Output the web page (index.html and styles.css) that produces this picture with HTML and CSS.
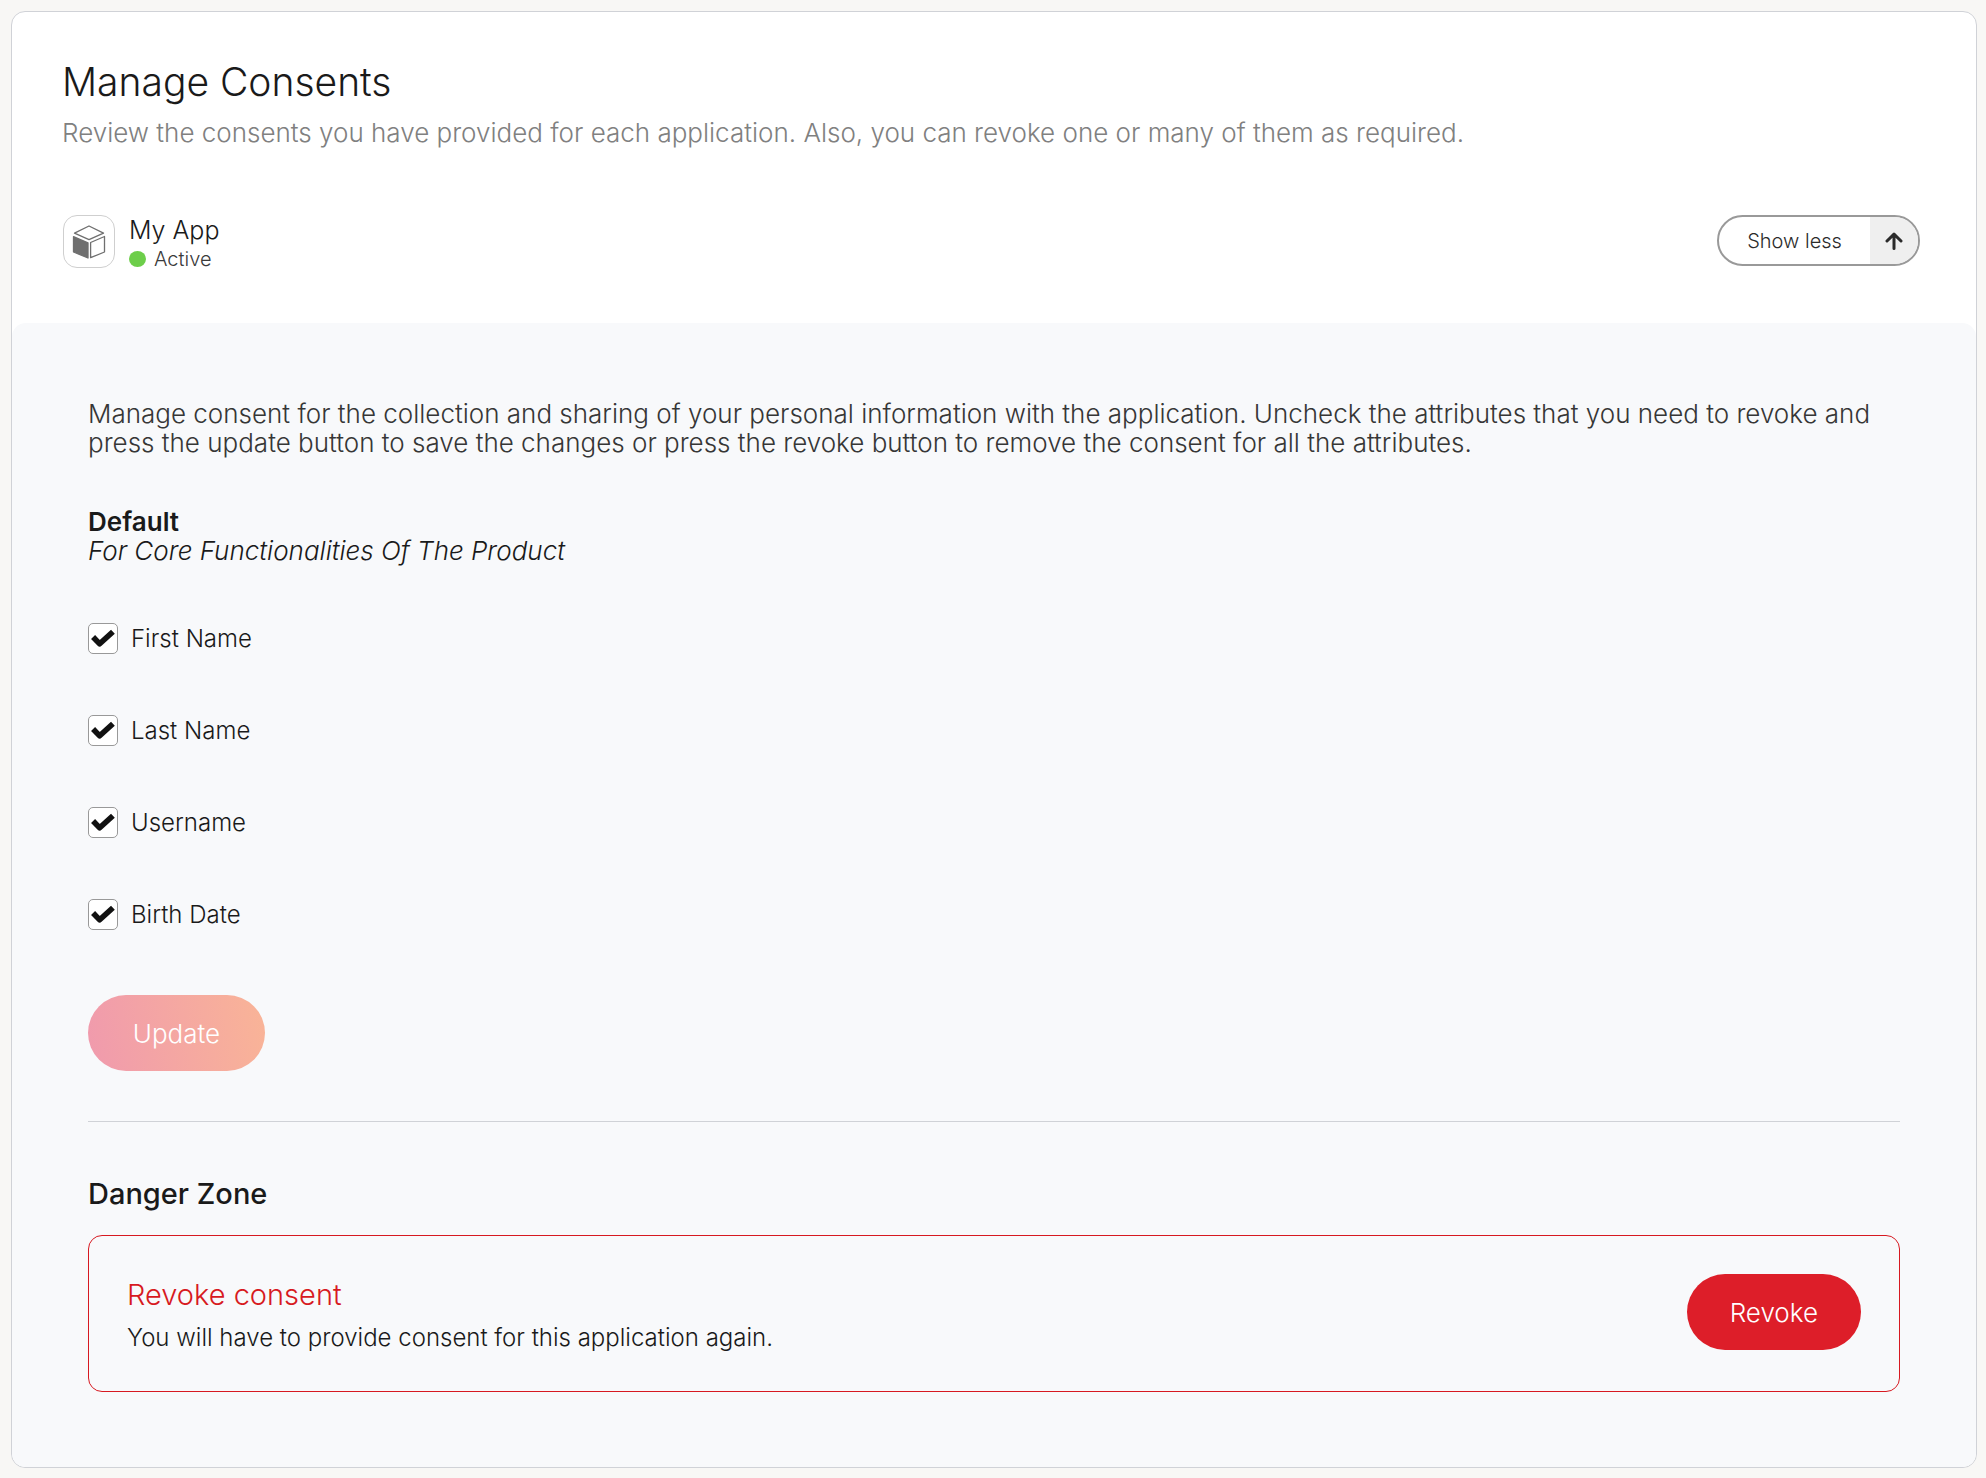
FILE: index.html
```html
<!DOCTYPE html>
<html lang="en">
<head>
<meta charset="utf-8">
<meta name="viewport" content="width=device-width, initial-scale=1">
<title>Manage Consents</title>
<link rel="stylesheet" href="styles.css">
</head>
<body>
<main class="card">
  <header class="card-header">
    <h1 class="title">Manage Consents</h1>
    <p class="subtitle">Review the consents you have provided for each application. Also, you can revoke one or many of them as required.</p>
  </header>

  <section class="app-row">
    <div class="app-icon">
      <svg width="34" height="34" viewBox="0 0 34 34" fill="none" stroke="#6f6f6f" stroke-width="1.3" stroke-linejoin="round" aria-hidden="true">
        <path d="M17 1 31.500 8.200 17 14.600 2.500 8.200Z"/>
        <path d="M1.500 11.700 16 17.800V33L1.500 27Z" fill="#6f6f6f"/>
        <path d="M32.500 11.500 18.600 17.500V32.700L32.500 27Z"/>
      </svg>
    </div>
    <div class="app-info">
      <h2 class="app-name">My App</h2>
      <p class="app-status"><span class="dot"></span>Active</p>
    </div>
    <button class="toggle" type="button" aria-expanded="true">
      <span class="toggle-text">Show less</span>
      <span class="toggle-icon">
        <svg width="18" height="18" viewBox="0 0 18 18" fill="none" stroke="#2b2b2b" stroke-width="3" stroke-linecap="round" stroke-linejoin="round" aria-hidden="true">
          <path d="M9 16.500V2.300M2 9 9 2.200 16 9"/>
        </svg>
      </span>
    </button>
  </section>

  <section class="panel">
    <p class="intro">Manage consent for the collection and sharing of your personal information with the application. Uncheck the attributes that you need to revoke and press the update button to save the changes or press the revoke button to remove the consent for all the attributes.</p>

    <form class="consent-form">
      <h3 class="purpose">Default</h3>
      <p class="purpose-note">For Core Functionalities Of The Product</p>
      <div class="checks">
        <label class="check"><input type="checkbox" checked>First Name</label>
        <label class="check"><input type="checkbox" checked>Last Name</label>
        <label class="check"><input type="checkbox" checked>Username</label>
        <label class="check"><input type="checkbox" checked>Birth Date</label>
      </div>
      <button class="btn btn-update" type="submit" disabled>Update</button>
    </form>

    <hr class="divider">

    <h3 class="danger-title">Danger Zone</h3>
    <div class="danger-box">
      <div class="danger-text">
        <h4 class="danger-heading">Revoke consent</h4>
        <p class="danger-note">You will have to provide consent for this application again.</p>
      </div>
      <button class="btn btn-revoke" type="button">Revoke</button>
    </div>
  </section>
</main>
</body>
</html>
```

FILE: styles.css
```css
* {
  box-sizing: border-box;
}

body {
  margin: 0;
  padding: 11px 9px 10px 11px;
  background: #f8f7f5;
  color: #1a1a1a;
  font-family: Inter, "Liberation Sans", sans-serif;
  font-weight: 350;
}

h1, h2, h3, h4, p {
  margin: 0;
  font-weight: 350;
}

button,
input {
  font: inherit;
  margin: 0;
}

.card {
  border: 1px solid #d0d2d7;
  border-radius: 14px;
  background: #fff;
}

.card-header {
  padding: 46px 50px 0;
}

.title {
  font-size: 39px;
  line-height: 48px;
}

.subtitle {
  margin-top: 12px;
  font-size: 26px;
  font-weight: 300;
  line-height: 30px;
  color: #808080;
}

.app-row {
  display: flex;
  align-items: flex-start;
  padding: 67px 56px 51px 51px;
}

.app-icon {
  display: flex;
  align-items: center;
  justify-content: center;
  width: 52px;
  height: 53px;
  border: 1px solid #cfcfcf;
  border-radius: 14px;
}

.app-info {
  flex: 1;
  padding-left: 14px;
}

.app-name {
  font-size: 25px;
  line-height: 31px;
}

.app-status {
  display: flex;
  align-items: center;
  gap: 8px;
  font-size: 20px;
  line-height: 26px;
  color: #3a3a3a;
}

.dot {
  width: 17px;
  height: 16px;
  border-radius: 50%;
  background: #6dce4a;
}

.toggle {
  display: flex;
  align-items: stretch;
  height: 51px;
  padding: 0;
  overflow: hidden;
  border: 2px solid #999;
  border-radius: 26px;
  background: #fff;
  color: #2b2b2b;
  font-size: 20px;
}

.toggle-text {
  display: flex;
  align-items: center;
  justify-content: center;
  width: 151px;
}

.toggle-icon {
  display: flex;
  align-items: center;
  justify-content: center;
  width: 48px;
  background: #efefef;
}

.panel {
  padding: 76px 76px 75px;
  border-radius: 14px;
  background: #f8f9fb;
}

.intro {
  font-size: 26px;
  line-height: 29px;
  color: #363636;
}

.consent-form {
  padding-top: 50px;
}

.purpose {
  font-size: 26px;
  font-weight: 600;
  line-height: 29px;
}

.purpose-note {
  font-size: 26px;
  font-style: italic;
  line-height: 29px;
}

.checks {
  display: grid;
  gap: 61px;
  padding: 58px 0 65px;
}

.check {
  display: flex;
  align-items: center;
  justify-self: start;
  gap: 13px;
  height: 31px;
  font-size: 24px;
}

.check input {
  appearance: none;
  width: 30px;
  height: 31px;
  border: 1px solid #999;
  border-radius: 5px;
  background: #fff;
}

.check input:checked {
  background: #fff url("data:image/svg+xml,%3Csvg xmlns='http://www.w3.org/2000/svg' viewBox='0 0 29 29' fill='none' stroke='%23111' stroke-width='5.500' stroke-linejoin='round'%3E%3Cpath d='M4.500 13 11 19.800 24 7.800'/%3E%3C/svg%3E") center / 29px 29px no-repeat;
}

.btn {
  height: 76px;
  padding: 0 43px;
  border: 0;
  border-radius: 38px;
  color: #fff;
  font-size: 26px;
  font-weight: 300;
}

.btn-update {
  display: block;
  min-width: 177px;
  background: linear-gradient(80deg, #f09aad, #f9b497);
}

.divider {
  margin: 50px 0 0;
  border: 0;
  border-top: 1px solid #d0d2d7;
}

.danger-title {
  margin-top: 54px;
  font-size: 29px;
  font-weight: 500;
  line-height: 36px;
}

.danger-box {
  display: flex;
  align-items: flex-start;
  justify-content: space-between;
  margin-top: 23px;
  padding: 38px 38px 35px;
  border: 1px solid #d71921;
  border-radius: 14px;
}

.danger-heading {
  color: #d71921;
  font-size: 29px;
  line-height: 42px;
}

.danger-note {
  margin-top: 4px;
  font-size: 24px;
  line-height: 36px;
}

.btn-revoke {
  background: #dd1e29;
}
```
